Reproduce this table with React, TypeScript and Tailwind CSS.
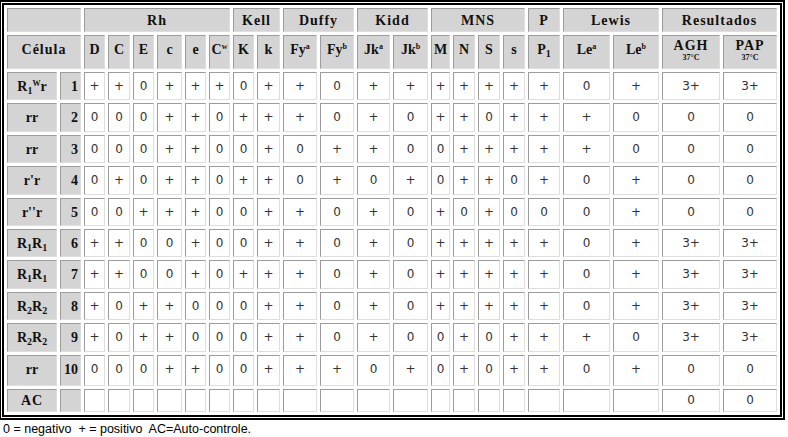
import React from "react";

type Col = { key: string; w: number; label: React.ReactNode };

const Sup = ({ children }: { children: React.ReactNode }) => (
  <span className="relative -top-[5px] text-[8px] leading-none">{children}</span>
);
const Sub = ({ children }: { children: React.ReactNode }) => (
  <span className="relative top-[3px] text-[10px] leading-none">{children}</span>
);

const cols: Col[] = [
  { key: "D", w: 21, label: "D" },
  { key: "C", w: 22, label: "C" },
  { key: "E", w: 21, label: "E" },
  { key: "c", w: 25, label: "c" },
  { key: "e", w: 21, label: "e" },
  { key: "Cw", w: 21, label: <>C<Sup>w</Sup></> },
  { key: "K", w: 21, label: "K" },
  { key: "k", w: 23, label: "k" },
  { key: "Fya", w: 34, label: <>Fy<Sup>a</Sup></> },
  { key: "Fyb", w: 34, label: <>Fy<Sup>b</Sup></> },
  { key: "Jka", w: 33, label: <>Jk<Sup>a</Sup></> },
  { key: "Jkb", w: 35, label: <>Jk<Sup>b</Sup></> },
  { key: "M", w: 19, label: "M" },
  { key: "N", w: 22, label: "N" },
  { key: "S", w: 22, label: "S" },
  { key: "s", w: 22, label: "s" },
  { key: "P1", w: 32, label: <>P<Sub>1</Sub></> },
  { key: "Lea", w: 47, label: <>Le<Sup>a</Sup></> },
  { key: "Leb", w: 46, label: <>Le<Sup>b</Sup></> },
];

const rows: { label: React.ReactNode; n: string; v: string }[] = [
  { label: <>R<Sub>1</Sub><Sup>W</Sup>r</>, n: "1", v: "++0+++0++0+++++++0+ 3+ 3+" },
  { label: "rr", n: "2", v: "000++0+++0+0++0+++0 0 0" },
  { label: "rr", n: "3", v: "000++00+0++00+++++0 0 0" },
  { label: "r'r", n: "4", v: "0+0++0++0+0+0++0+0+ 0 0" },
  { label: "r''r", n: "5", v: "00+++00++0+0+0+000+ 0 0" },
  { label: <>R<Sub>1</Sub>R<Sub>1</Sub></>, n: "6", v: "++00+00++0+0+++++0+ 3+ 3+" },
  { label: <>R<Sub>1</Sub>R<Sub>1</Sub></>, n: "7", v: "++00+0+++0+0+++++0+ 3+ 3+" },
  { label: <>R<Sub>2</Sub>R<Sub>2</Sub></>, n: "8", v: "+0++000++0+0+++++0+ 3+ 3+" },
  { label: <>R<Sub>2</Sub>R<Sub>2</Sub></>, n: "9", v: "+0++000++0+00+0+++0 3+ 3+" },
  { label: "rr", n: "10", v: "000++00+++0+0+0++0+ 0 0" },
];

const bd =
  "border border-t-[#9c9c9c] border-l-[#9c9c9c] border-b-[#dedede] border-r-[#dedede]";
const gray = `${bd} bg-[#d4d4d4]`;
const hdr = "font-['Liberation_Serif',serif] font-bold text-[14px] text-[#111] tracking-[1px]";
const val = "font-['DejaVu_Sans',sans-serif] text-[12px] text-[#333]";

function parse(v: string) {
  const [a, agh, pap] = v.split(" ");
  return { cells: a.split(""), agh, pap };
}

export default function App() {
  return (
    <div className="w-[788px] h-[437px] bg-white overflow-hidden">
      <table className="border-separate border-spacing-[3px] border-[5px] border-double border-black bg-white -ml-[1px]">
        <tbody>
          <tr className="h-[24px]">
            <td colSpan={2} className={gray}></td>
            <td colSpan={6} className={`${gray} ${hdr} text-center align-middle`}>Rh</td>
            <td colSpan={2} className={`${gray} ${hdr} text-center align-middle`}>Kell</td>
            <td colSpan={2} className={`${gray} ${hdr} text-center align-middle`}>Duffy</td>
            <td colSpan={2} className={`${gray} ${hdr} text-center align-middle`}>Kidd</td>
            <td colSpan={4} className={`${gray} ${hdr} text-center align-middle`}>MNS</td>
            <td className={`${gray} ${hdr} text-center align-middle`}>P</td>
            <td colSpan={2} className={`${gray} ${hdr} text-center align-middle`}>Lewis</td>
            <td colSpan={2} className={`${gray} ${hdr} text-center align-middle`}>Resultados</td>
          </tr>
          <tr className="h-[34px]">
            <td colSpan={2} className={`${gray} ${hdr} text-center align-top pt-[3px]`}>Célula</td>
            {cols.map((c) => (
              <td
                key={c.key}
                style={{ width: c.w }}
                className={`${gray} ${hdr} text-center align-top pt-[3px] px-0 whitespace-nowrap tracking-normal`}
              >
                {c.label}
              </td>
            ))}
            <td className={`w-[58px] ${gray} ${hdr} text-center align-top pt-[3px] leading-[14px]`}>
              AGH
              <div className="text-[8px] leading-[9px] tracking-normal">37°C</div>
            </td>
            <td className={`w-[54px] ${gray} ${hdr} text-center align-top pt-[3px] leading-[14px]`}>
              PAP
              <div className="text-[8px] leading-[9px] tracking-normal">37°C</div>
            </td>
          </tr>
          {rows.map((r, i) => {
            const p = parse(r.v);
            const h = i === rows.length - 1 ? "h-[31px]" : "h-[28.4px]";
            return (
              <tr key={i} className={h}>
                <td className={`w-[50px] ${gray} ${hdr} text-center align-top pt-[3px] whitespace-nowrap tracking-normal`}>
                  {r.label}
                </td>
                <td className={`w-[21px] ${gray} ${hdr} text-right align-top pt-[3px] pr-[2px] tracking-normal`}>
                  {r.n}
                </td>
                {p.cells.map((c, j) => (
                  <td key={j} className={`${bd} ${val} text-center align-top pt-[4px]`}>
                    {c}
                  </td>
                ))}
                <td className={`${bd} ${val} text-center align-top pt-[4px]`}>{p.agh}</td>
                <td className={`${bd} ${val} text-center align-top pt-[4px]`}>{p.pap}</td>
              </tr>
            );
          })}
          <tr className="h-[20px]">
            <td className={`${gray} ${hdr} text-center align-middle`}>AC</td>
            <td className={gray}></td>
            {cols.map((c) => (
              <td key={c.key} className={bd}></td>
            ))}
            <td className={`${bd} ${val} text-center align-middle`}>0</td>
            <td className={`${bd} ${val} text-center align-middle`}>0</td>
          </tr>
        </tbody>
      </table>
      <div className="pl-[3px] font-['Liberation_Sans',sans-serif] text-[12.5px] text-black whitespace-pre">
        0 = negativo  + = positivo  AC=Auto-controle.
      </div>
    </div>
  );
}
